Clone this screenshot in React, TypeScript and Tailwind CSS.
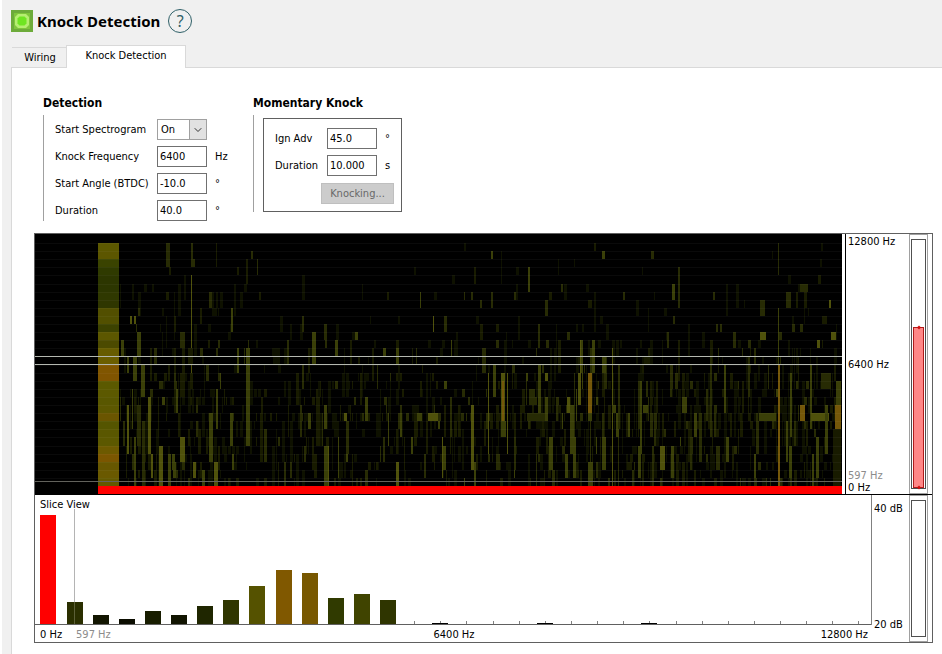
import React, { useState } from 'react'
import { ChevronDown } from 'lucide-react'

// [x, first row, row count, width, level]
type Mark = [number, number, number, number, number]

const ROW_TOP = 9
const ROW_HEIGHT = 8.1
const ROWS = 30

const levels = ['#080a00', '#0e1100', '#181b00', '#272b04', '#3a3f08', '#4f510b', '#745709']

const startColumn = [
  '#5c5800', '#5c5600', '#3a4300', '#2f3a00', '#2c3600', '#2c3600', '#2f3800', '#2f3600',
  '#524f00', '#525000', '#3c4200', '#5c5700', '#4c4a00', '#675c00', '#6b5e00', '#805600',
  '#805400', '#5b5900', '#5c5900', '#595700', '#5c5700', '#6a5500', '#555500', '#5a5700',
  '#5c5800', '#6d5a00', '#7b5600', '#675700', '#6a5900', '#635900',
]

const marks: Mark[] = [
  [131, 0, 3, 4, 3], [134, 3, 1, 2, 2], [156, 0, 3, 2, 3], [158, 2, 1, 2, 3], [156, 4, 12, 1, 5],
  [181, 0, 3, 1, 2], [216, 1, 1, 2, 3], [211, 2, 3, 2, 2], [222, 2, 2, 1, 3], [202, 3, 1, 2, 2],
  [131, 6, 1, 3, 2], [139, 6, 6, 1, 1], [174, 6, 2, 3, 3], [181, 6, 2, 2, 1], [224, 6, 1, 2, 2],
  [196, 8, 3, 2, 4], [165, 8, 2, 2, 2], [103, 8, 1, 2, 3], [95, 9, 1, 2, 5], [99, 9, 1, 2, 5],
  [139, 9, 2, 2, 2], [267, 9, 2, 2, 3], [101, 10, 1, 1, 3], [290, 10, 3, 2, 3], [277, 11, 4, 4, 4],
  [102, 11, 3, 4, 4], [86, 12, 2, 3, 4], [145, 11, 2, 5, 3], [252, 12, 3, 2, 3], [153, 13, 2, 5, 2],
  [165, 13, 1, 3, 3], [202, 13, 3, 2, 4], [211, 13, 12, 4, 4], [238, 13, 2, 7, 1], [98, 14, 3, 4, 4],
  [106, 15, 4, 4, 4], [92, 14, 2, 2, 4], [139, 16, 2, 2, 3], [145, 16, 3, 5, 2], [261, 16, 4, 3, 2],
  [124, 17, 1, 4, 3], [127, 19, 1, 3, 4], [181, 18, 5, 2, 4], [113, 19, 7, 3, 5], [92, 20, 6, 2, 5],
  [102, 20, 5, 4, 3], [174, 21, 6, 4, 4], [195, 21, 4, 3, 4], [226, 19, 8, 2, 2], [273, 21, 2, 3, 4],
  [281, 19, 6, 4, 2], [290, 25, 5, 4, 5], [145, 24, 3, 5, 5], [133, 26, 4, 3, 4], [124, 25, 5, 4, 5],
  [158, 27, 2, 3, 5], [179, 27, 3, 4, 5], [99, 24, 6, 2, 4], [107, 22, 8, 3, 3], [116, 26, 3, 2, 5],
  [138, 27, 2, 3, 4], [167, 28, 2, 3, 4], [197, 26, 2, 2, 4], [88, 22, 3, 2, 3], [97, 18, 5, 1, 4],
  [289, 10, 2, 3, 3], [300, 12, 2, 3, 4], [320, 11, 1, 3, 4], [348, 13, 1, 3, 4], [361, 13, 2, 3, 4],
  [352, 6, 1, 2, 2], [385, 6, 2, 1, 4], [398, 9, 2, 1, 5], [409, 9, 2, 3, 3], [456, 1, 1, 2, 4],
  [439, 3, 2, 2, 2], [466, 1, 4, 1, 1], [493, 3, 3, 2, 4], [526, 5, 1, 2, 3], [510, 7, 2, 3, 3],
  [429, 6, 1, 1, 3], [436, 6, 1, 2, 3], [479, 6, 1, 2, 3], [514, 6, 1, 3, 2], [456, 6, 2, 2, 3],
  [445, 7, 1, 2, 3], [445, 10, 2, 3, 2], [461, 10, 1, 3, 2], [461, 12, 1, 3, 3], [503, 10, 3, 2, 3],
  [532, 11, 1, 3, 3], [545, 12, 4, 3, 5], [447, 13, 3, 4, 3], [416, 12, 2, 1, 4], [342, 15, 3, 1, 3],
  [300, 17, 1, 3, 3], [409, 17, 1, 3, 4], [330, 19, 3, 3, 4], [349, 19, 1, 3, 3], [289, 20, 3, 3, 4],
  [309, 21, 1, 3, 5], [382, 21, 1, 5, 4], [393, 21, 1, 10, 5], [403, 22, 1, 2, 4], [426, 21, 1, 3, 3],
  [371, 21, 1, 3, 3], [436, 20, 8, 3, 5], [453, 16, 10, 1, 5], [458, 15, 4, 3, 4], [466, 16, 6, 4, 5],
  [467, 17, 5, 2, 6], [466, 22, 2, 5, 4], [472, 16, 10, 1, 5], [491, 16, 1, 2, 4], [503, 15, 6, 3, 4],
  [510, 16, 1, 3, 5], [494, 18, 2, 6, 3], [492, 21, 1, 20, 3], [510, 19, 3, 3, 4], [543, 16, 4, 3, 5],
  [532, 19, 2, 3, 5], [535, 20, 6, 4, 4], [407, 25, 3, 4, 4], [361, 27, 3, 3, 5], [289, 25, 5, 4, 4],
  [303, 24, 5, 1, 4], [330, 28, 2, 3, 3], [348, 24, 3, 2, 3], [376, 24, 2, 2, 4], [407, 24, 5, 1, 5],
  [461, 26, 2, 4, 3], [514, 24, 4, 4, 4], [530, 26, 3, 3, 4], [538, 24, 5, 3, 4], [501, 24, 2, 3, 2],
  [479, 24, 4, 2, 3], [559, 0, 1, 2, 2], [567, 1, 1, 3, 4], [616, 1, 1, 3, 3], [743, 0, 4, 1, 3],
  [786, 0, 1, 2, 1], [643, 3, 5, 2, 3], [637, 5, 2, 3, 4], [765, 5, 1, 8, 3], [783, 4, 1, 3, 2],
  [588, 6, 1, 2, 3], [678, 6, 1, 2, 3], [751, 6, 2, 5, 3], [761, 6, 2, 2, 2], [769, 6, 2, 3, 2],
  [794, 7, 1, 2, 5], [725, 7, 2, 5, 3], [553, 7, 1, 4, 2], [638, 9, 1, 2, 3], [787, 9, 1, 5, 2],
  [757, 10, 1, 3, 3], [765, 10, 1, 3, 3], [681, 10, 1, 2, 3], [685, 10, 1, 2, 3], [725, 11, 1, 6, 5],
  [796, 11, 1, 5, 5], [744, 11, 1, 3, 3], [632, 11, 2, 2, 3], [698, 11, 2, 3, 3], [782, 12, 1, 3, 5],
  [713, 12, 1, 3, 3], [546, 12, 4, 2, 4], [557, 12, 4, 3, 4], [567, 14, 2, 4, 4], [609, 14, 1, 4, 2],
  [743, 8, 7, 1, 4], [743, 15, 15, 2, 6], [553, 16, 5, 4, 6], [577, 13, 17, 1, 5], [583, 15, 8, 2, 3],
  [605, 17, 9, 2, 4], [640, 16, 2, 3, 3], [655, 17, 1, 3, 3], [675, 14, 10, 2, 3], [689, 15, 6, 2, 4],
  [713, 14, 5, 2, 3], [755, 16, 8, 2, 4], [775, 15, 8, 2, 4], [608, 20, 1, 5, 4], [577, 20, 1, 4, 4],
  [647, 19, 2, 5, 4], [765, 20, 2, 5, 6], [724, 21, 1, 17, 4], [776, 21, 1, 18, 5], [801, 17, 3, 5, 4],
  [800, 20, 3, 6, 6], [615, 21, 3, 3, 3], [553, 21, 1, 4, 4], [567, 24, 4, 4, 4], [625, 25, 3, 5, 5],
  [636, 25, 4, 3, 4], [664, 21, 6, 3, 3], [691, 24, 3, 3, 4], [681, 25, 3, 4, 3], [719, 26, 3, 2, 4],
  [754, 25, 4, 3, 4], [781, 24, 5, 3, 4], [790, 20, 6, 3, 4], [603, 25, 4, 3, 4], [592, 27, 1, 5, 2],
  [553, 27, 3, 5, 4], [798, 23, 7, 8, 2], [786, 16, 2, 10, 3], [777, 26, 4, 2, 4], [659, 21, 3, 3, 4],
  [695, 16, 2, 3, 2],
]

// Small repeatable generator, so that the background speckle is the same on every render.
function createRandom(seed: number) {
  let s = seed
  return () => {
    s = (s * 1664525 + 1013904223) % 4294967296
    return s / 4294967296
  }
}

function density(x: number, row: number) {
  const busy = x < 190 || x > 500 ? 1.3 : 0.8
  if (row < 5) return 0.006
  if (row < 9) return 0.014 * busy
  if (row < 12) return 0.025 * busy
  if (row < 16) return 0.08 * busy
  if (row === 21) return x > 270 ? 0.5 : 0.25
  return 0.16 * busy
}

function createSpeckle(): Mark[] {
  const random = createRandom(597)
  const out: Mark[] = []
  for (let x = 85; x < 804; x += 2) {
    let row = 0
    while (row < ROWS) {
      if (random() < density(x, row)) {
        const count = Math.min(ROWS - row, 1 + Math.floor(random() * random() * 6))
        const level = row < 12 ? 1 : 1 + Math.floor(random() * random() * 4)
        out.push([x, row, count, 1 + Math.floor(random() * 3), level])
        row += count
      } else {
        row += 1
      }
    }
  }
  return out
}

const cells = [...createSpeckle(), ...marks]

const bars = [
  { i: 0, h: 109, fill: '#ff0000' },
  { i: 1, h: 22, fill: '#2a2f00' },
  { i: 2, h: 9, fill: '#121500' },
  { i: 3, h: 5, fill: '#0b0d00' },
  { i: 4, h: 13, fill: '#181d00' },
  { i: 5, h: 9, fill: '#111400' },
  { i: 6, h: 18, fill: '#1f2600' },
  { i: 7, h: 24, fill: '#2f3500' },
  { i: 8, h: 38, fill: '#555200' },
  { i: 9, h: 54, fill: '#805800' },
  { i: 10, h: 51, fill: '#785800' },
  { i: 11, h: 26, fill: '#303a00' },
  { i: 12, h: 30, fill: '#404400' },
  { i: 13, h: 24, fill: '#2f3500' },
  { i: 15, h: 1, fill: '#000000' },
  { i: 19, h: 1, fill: '#000000' },
  { i: 23, h: 1, fill: '#000000' },
]

const barCenter = (i: number) => 13.4 + i * 26.13

function Spectrogram() {
  return (
    <svg
      viewBox="0 0 807 260"
      preserveAspectRatio="none"
      className="block h-[260px] w-full bg-black"
      role="img"
      aria-label="Spectrogram"
      shapeRendering="crispEdges"
    >
      {cells.map(([x, row, count, width, level], n) => (
        <rect
          key={n}
          x={x}
          y={ROW_TOP + row * ROW_HEIGHT}
          width={width}
          height={count * ROW_HEIGHT}
          fill={levels[level]}
        />
      ))}
      {startColumn.map((fill, row) => (
        <rect key={row} x="63" y={ROW_TOP + row * ROW_HEIGHT} width="21" height={ROW_HEIGHT + 0.5} fill={fill} />
      ))}
      {startColumn.map((_, row) => (
        <rect key={row} x="0" y={Math.round(ROW_TOP + row * ROW_HEIGHT)} width="807" height="1" fill="#ffffff" opacity="0.04" />
      ))}
      <rect x="0" y="122" width="807" height="1" fill="#b4b8b0" />
      <rect x="0" y="130" width="807" height="1" fill="#b4b8b0" />
      <rect x="0" y="247" width="807" height="1" fill="#62625c" />
      <rect x="63" y="252" width="744" height="8" fill="#ff0000" />
    </svg>
  )
}

function SliceChart() {
  return (
    <svg
      viewBox="0 0 836 130"
      preserveAspectRatio="none"
      className="block h-[130px] w-full"
      role="img"
      aria-label="Slice view"
      shapeRendering="crispEdges"
    >
      {Array.from({ length: 32 }, (_, i) => (
        <rect key={i} x={barCenter(i)} y="126" width="1" height="3" fill="#808080" />
      ))}
      {bars.map((bar) => (
        <rect key={bar.i} x={barCenter(bar.i) - 8} y={129 - bar.h} width="16" height={bar.h} fill={bar.fill} />
      ))}
      <rect x="39" y="14" width="1" height="93" fill="#b4b4b4" />
      <rect x="39" y="107" width="1" height="22" fill="#5c6038" />
      <rect x="0" y="129" width="836" height="1" fill="#606060" />
    </svg>
  )
}

function Gauge({ label, initial }: { label: string; initial: number }) {
  const [value, setValue] = useState(initial)
  return (
    <div className="flex h-full w-[19px] flex-col border border-[#a0a0a0] px-px py-1">
      <div className="relative flex flex-1 flex-col justify-end border border-[#505050] px-px">
        {value > 0 && (
          <div
            className="relative flex flex-col border border-[#b01c1c] bg-[#ff8787]"
            style={{ height: `${value}%` }}
          >
            <span className="absolute -top-[2px] left-1/2 h-[3px] w-[3px] -translate-x-1/2 rotate-45 bg-[#d01010]" />
            <span className="absolute -bottom-[2px] left-1/2 h-[3px] w-[3px] -translate-x-1/2 rotate-45 bg-[#d01010]" />
          </div>
        )}
        <input
          type="range"
          aria-label={label}
          min={0}
          max={100}
          value={value}
          onChange={(e) => setValue(Number(e.target.value))}
          className="absolute inset-0 h-full w-full opacity-0 [direction:rtl] [writing-mode:vertical-lr]"
        />
      </div>
    </div>
  )
}

const fieldClass = 'h-[21px] w-[50px] border border-[#707070] bg-white px-[2px] outline-none'

function NumberField({ id, label, value, unit }: { id: string; label: string; value: string; unit: string }) {
  return (
    <>
      <label htmlFor={id} className="whitespace-nowrap">{label}</label>
      <input id={id} type="text" defaultValue={value} className={fieldClass} />
      <span className="pl-2">{unit}</span>
    </>
  )
}

export default function App() {
  return (
    <div className="min-h-screen border-l-2 border-white bg-[#f0f0f0] font-['DejaVu_Sans_Condensed','DejaVu_Sans',sans-serif] text-[11px] leading-4 text-black">
      <header className="flex h-[45px] items-center gap-1 pb-1 pl-[9px]">
        <svg viewBox="0 0 22 22" className="h-[22px] w-[22px]" aria-hidden="true">
          <rect width="22" height="22" fill="#6dab3a" />
          <rect x="3" y="3" width="16" height="16" fill="#7fc63c" />
          <path d="M7 4h8l3 3v8l-3 3H7l-3-3V7z" fill="#b6ee72" />
          <path d="M8.500 6.500h5l2 2v5l-2 2h-5l-2-2v-5z" fill="#6fe522" />
        </svg>
        <h1 className="font-['Noto_Sans',sans-serif] text-[15px] font-bold leading-5">Knock Detection</h1>
        <button
          type="button"
          aria-label="Help"
          className="ml-1 flex h-6 w-6 items-center justify-center rounded-full border border-[#2f6068] font-['Noto_Sans',sans-serif] text-[16px] text-[#2f6068]"
        >
          ?
        </button>
      </header>

      <div role="tablist" className="flex items-end pl-[10px]">
        <button type="button" role="tab" aria-selected="false" className="h-5 w-[54px] border-t border-[#d9d9d9] pl-[2px]">
          Wiring
        </button>
        <button
          type="button"
          role="tab"
          aria-selected="true"
          className="relative z-10 -mb-px h-[23px] w-[120px] border border-b-0 border-[#d9d9d9] bg-white pb-[3px]"
        >
          Knock Detection
        </button>
      </div>

      <main className="ml-[9px] min-h-[587px] border-l border-t border-[#d9d9d9] bg-white pb-3 pl-[22px] pr-[9px] pt-[27px]">
        <div className="flex items-start pl-[9px]">
          <section className="w-[210px]">
            <h2 className="text-[12px] font-bold">Detection</h2>
            <div className="mt-1 grid grid-cols-[102px_50px_auto] items-center gap-y-[6px] border-l border-[#a0a0a0] pl-[11px] pt-1">
              <label htmlFor="spectrogram" className="whitespace-nowrap">Start Spectrogram</label>
              <div className="relative h-[21px] w-[50px]">
                <select id="spectrogram" className="h-full w-full appearance-none border border-[#a0a0a0] bg-white pl-[3px] outline-none">
                  <option>On</option>
                  <option>Off</option>
                </select>
                <span className="pointer-events-none absolute inset-y-0 right-0 flex w-[18px] items-center justify-center border border-[#a0a0a0] bg-[#e1e1e1]">
                  <ChevronDown className="h-3 w-3 text-[#303030]" />
                </span>
              </div>
              <span />
              <NumberField id="frequency" label="Knock Frequency" value="6400" unit="Hz" />
              <NumberField id="angle" label="Start Angle (BTDC)" value="-10.0" unit="°" />
              <NumberField id="duration" label="Duration" value="40.0" unit="°" />
            </div>
          </section>

          <section>
            <h2 className="text-[12px] font-bold">Momentary Knock</h2>
            <div className="mt-1 border-l border-[#a0a0a0] pl-[9px] pt-[3px]">
              <div className="w-[139px] border border-[#606060] pb-[7px] pl-[11px] pr-[7px] pt-[9px]">
                <div className="grid grid-cols-[52px_50px_auto] items-center gap-y-[6px]">
                  <NumberField id="advance" label="Ign Adv" value="45.0" unit="°" />
                  <NumberField id="knock-duration" label="Duration" value="10.000" unit="s" />
                </div>
                <div className="mt-[7px] flex justify-end">
                  <button type="button" disabled className="h-[21px] w-[73px] border border-[#bfbfbf] bg-[#cccccc] text-[#686868]">
                    Knocking...
                  </button>
                </div>
              </div>
            </div>
          </section>
        </div>

        <div className="mt-3 border border-[#606060]">
          <div className="flex border-b border-black">
            <div className="min-w-0 flex-1">
              <Spectrogram />
            </div>
            <div className="ml-[3px] flex w-[64px] flex-col justify-between whitespace-nowrap border-l border-black pl-[2px]">
              <div className="flex flex-col">
                <span className="h-[123px]">12800 Hz</span>
                <span>6400 Hz</span>
              </div>
              <div className="flex flex-col leading-3">
                <span className="text-[#8c8c8c]">597 Hz</span>
                <span>0 Hz</span>
              </div>
            </div>
            <div className="mr-1">
              <Gauge label="Spectrogram range" initial={65} />
            </div>
          </div>

          <div className="flex">
            <div className="min-w-0 flex-1">
              <div className="relative border-r border-[#808080]">
                <SliceChart />
                <span className="absolute left-[5px] top-[2px]">Slice View</span>
              </div>
              <div className="flex h-[17px] justify-between pl-[5px] pr-1 pt-[2px]">
                <div className="flex flex-1 gap-[14px]">
                  <span>0 Hz</span>
                  <span className="text-[#8c8c8c]">597 Hz</span>
                </div>
                <span>6400 Hz</span>
                <span className="flex-1 text-right">12800 Hz</span>
              </div>
            </div>
            <div className="flex w-[37px] flex-col justify-between whitespace-nowrap pb-[9px] pl-[2px] pt-[6px]">
              <span>40 dB</span>
              <span>20 dB</span>
            </div>
            <div className="mr-1">
              <Gauge label="Slice range" initial={0} />
            </div>
          </div>
        </div>
      </main>
    </div>
  )
}
